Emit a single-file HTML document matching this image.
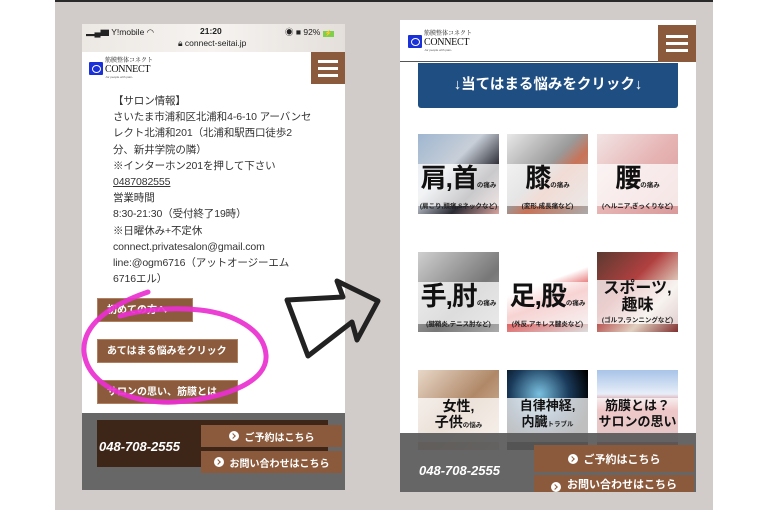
<!DOCTYPE html>
<html><head><meta charset="utf-8">
<style>
*{margin:0;padding:0;box-sizing:border-box}
body{width:770px;height:510px;background:#fff;position:relative;overflow:hidden;font-family:"Liberation Sans","Noto Sans CJK JP",sans-serif}
.abs{position:absolute}
.panel{left:55px;top:0;width:658px;height:510px;background:#d1ccc9;border-top:2px solid #2a2a2a}
.logo{display:flex;align-items:center}
.logo .sq{width:14px;height:13px;background:#1a30d8;border-radius:1px;position:relative}
.logo .sq:after{content:"";position:absolute;left:3px;top:3px;width:7px;height:6px;border:1.5px solid #fff;border-radius:50%}
.logo .t1{font-size:6px;color:#222;line-height:7px;font-family:"Liberation Serif","Noto Serif CJK SC",serif}
.logo .t2{font-size:10px;color:#111;line-height:10px;font-family:"Liberation Serif",serif;letter-spacing:-.3px}
.logo .t3{font-size:3px;color:#555;line-height:4px}
.ham{background:#8b5a3c}
.ham i{position:absolute;left:22%;width:56%;height:3px;background:#fff}
.info{left:113px;top:93px;font-size:10.5px;line-height:16.2px;color:#333;width:205px;letter-spacing:-.1px}
.bbtn{background:#8c5b3d;color:#fff;font-size:10px;font-weight:bold;line-height:23px;padding-left:9px;border:1px solid #b08060}
.rbtn{background:#8b5a3c;color:#fff;font-size:10px;font-weight:bold;display:flex;align-items:center;justify-content:center;gap:6px}
.rbtn b{width:10px;height:10px;background:#fff;border-radius:50%;display:inline-block;position:relative}
.rbtn b:after{content:"";position:absolute;left:2px;top:3px;width:3px;height:3px;border-right:1.5px solid #8b5a3c;border-top:1.5px solid #8b5a3c;transform:rotate(45deg)}
.tile{width:81px;height:80px;overflow:hidden}
.band{position:absolute;left:0;width:100%;background:rgba(255,255,255,.75);text-align:center;color:#111}
.big{font-size:26px;font-weight:bold;line-height:28px;letter-spacing:-1px}
.small{font-size:6.5px;color:#222;font-weight:bold;letter-spacing:0}
</style></head><body>
<div class="abs panel"></div>

<!-- LEFT PHONE -->
<div class="abs" style="left:82px;top:24px;width:263px;height:28px;background:linear-gradient(90deg,#ece8e4,#f6f3f0 50%,#e4dfdb)"></div>
<div class="abs" style="left:86px;top:26px;font-size:8.5px;color:#222">▂▄▆ Y!mobile ◠</div>
<div class="abs" style="left:200px;top:26px;font-size:8.5px;font-weight:bold;color:#222">21:20</div>
<div class="abs" style="left:285px;top:26px;font-size:8.5px;color:#222">◉ ■ 92% <span style="background:#7ed04b;font-size:6px;padding:0 2px">⚡</span></div>
<div class="abs" style="left:178px;top:38px;font-size:8.5px;color:#222">🔒︎ connect-seitai.jp</div>
<div class="abs" style="left:82px;top:52px;width:263px;height:361px;background:#fff"></div>
<div class="abs logo" style="left:89px;top:58px"><div class="sq"></div><div style="margin-left:2px"><div class="t1">筋膜整体コネクト</div><div class="t2">CONNECT</div><div class="t3">-for people with pain-</div></div></div>
<div class="abs ham" style="left:311px;top:52px;width:34px;height:32px"><i style="top:8px"></i><i style="top:15px"></i><i style="top:22px"></i></div>
<div class="abs info">【サロン情報】<br>さいたま市浦和区北浦和4-6-10 アーバンセ<br>レクト北浦和201（北浦和駅西口徒歩2<br>分、新井学院の隣）<br>※インターホン201を押して下さい<br><u>0487082555</u><br>営業時間<br>8:30-21:30（受付終了19時）<br>※日曜休み+不定休<br>connect.privatesalon@gmail.com<br>line:@ogm6716（アットオージーエム<br>6716エル）</div>
<div class="abs bbtn" style="left:97px;top:298px;width:96px;height:24px">初めての方へ</div>
<div class="abs bbtn" style="left:97px;top:339px;width:141px;height:24px">あてはまる悩みをクリック</div>
<div class="abs bbtn" style="left:97px;top:380px;width:141px;height:24px">サロンの思い、筋膜とは</div>
<div class="abs" style="left:82px;top:413px;width:263px;height:77px;background:#676767"></div>
<div class="abs" style="left:97px;top:420px;width:231px;height:47px;background:#3d2618"></div>
<div class="abs" style="left:99px;top:439px;font-size:13px;font-style:italic;color:#fff;font-weight:bold">048-708-2555</div>
<div class="abs rbtn" style="left:201px;top:425px;width:141px;height:22px"><b></b>ご予約はこちら</div>
<div class="abs rbtn" style="left:201px;top:451px;width:141px;height:22px"><b></b>お問い合わせはこちら</div>

<svg class="abs" style="left:0;top:0" width="770" height="510">
<path d="M148 292 C110 305,82 325,84 352 C88 390,140 404,175 402 C230 398,268 380,266 355 C264 330,235 314,200 310 C170 307,140 310,120 316" fill="none" stroke="#ea2fd0" stroke-width="5" stroke-linecap="round" opacity=".92"/>
<polygon points="287,300 343,297 337,281 378,301 357,340 352,322 308,356" fill="none" stroke="#222" stroke-width="5" stroke-linejoin="round"/>
</svg>

<!-- RIGHT PHONE -->
<div class="abs" style="left:400px;top:20px;width:296px;height:472px;background:#fff"></div>
<div class="abs" style="left:400px;top:61px;width:296px;height:1px;background:#555"></div>
<div class="abs logo" style="left:408px;top:31px"><div class="sq"></div><div style="margin-left:2px"><div class="t1">筋膜整体コネクト</div><div class="t2">CONNECT</div><div class="t3">-for people with pain-</div></div></div>
<div class="abs ham" style="left:658px;top:25px;width:38px;height:37px"><i style="top:10px"></i><i style="top:17px"></i><i style="top:24px"></i></div>
<div class="abs" style="left:418px;top:63px;width:260px;height:45px;background:#1f4e83;border-radius:0 0 3px 3px;color:#fff;font-size:14.5px;font-weight:bold;text-align:center;line-height:45px">↓当てはまる悩みをクリック↓</div>

<div class="abs tile" style="left:418px;top:134px;background:linear-gradient(135deg,#9fb6d0,#c8cfd8 40%,#2a2a33 70%,#d9a6a0)"><div class="band" style="top:30px;height:42px"><div class="big">肩,首<span class="small">の痛み</span></div><div class="small">(肩こり,頭痛,Sネックなど)</div></div></div>
<div class="abs tile" style="left:507px;top:134px;background:linear-gradient(135deg,#e8e8e8,#9a9a9a 45%,#c87358 60%,#aaa)"><div class="band" style="top:30px;height:42px"><div class="big">膝<span class="small">の痛み</span></div><div class="small">(変形,成長痛など)</div></div></div>
<div class="abs tile" style="left:597px;top:134px;background:linear-gradient(135deg,#f2e4e4,#e6b3b3 50%,#d99a9a)"><div class="band" style="top:30px;height:42px"><div class="big">腰<span class="small">の痛み</span></div><div class="small">(ヘルニア,ぎっくりなど)</div></div></div>

<div class="abs tile" style="left:418px;top:252px;background:linear-gradient(135deg,#cfcfcf,#777 60%,#aaa)"><div class="band" style="top:30px;height:42px"><div class="big">手,肘<span class="small">の痛み</span></div><div class="small">(腱鞘炎,テニス肘など)</div></div></div>
<div class="abs tile" style="left:507px;top:252px;background:linear-gradient(160deg,#fff 40%,#e05050 60%,#ddd)"><div class="band" style="top:30px;height:42px"><div class="big">足,股<span class="small">の痛み</span></div><div class="small">(外反,アキレス腱炎など)</div></div></div>
<div class="abs tile" style="left:597px;top:252px;background:linear-gradient(135deg,#5a3a30,#b04040 40%,#e0d0c0 70%,#803030)"><div class="band" style="top:28px;height:44px"><div style="font-size:16px;font-weight:bold;line-height:17px">スポーツ,<br>趣味</div><div class="small">(ゴルフ,ランニングなど)</div></div></div>

<div class="abs tile" style="left:418px;top:370px;background:linear-gradient(135deg,#e8d8c8,#b08868 50%,#e0c8b0)"><div class="band" style="top:28px;height:44px"><div style="font-size:14px;font-weight:bold;line-height:16px">女性,<br>子供<span class="small">の悩み</span></div></div></div>
<div class="abs tile" style="left:507px;top:370px;background:radial-gradient(circle at 40% 30%,#7ac0e0,#1a3a5a 40%,#000 70%)"><div class="band" style="top:28px;height:44px"><div style="font-size:13px;font-weight:bold;line-height:16px">自律神経,<br>内臓<span class="small">トラブル</span></div></div></div>
<div class="abs tile" style="left:597px;top:370px;background:linear-gradient(180deg,#a8c4e8,#e8eef8 30%,#c02828 50%,#801818)"><div class="band" style="top:28px;height:44px"><div style="font-size:13px;font-weight:bold;line-height:16px">筋膜とは？<br>サロンの思い</div></div></div>

<div class="abs" style="left:400px;top:433px;width:296px;height:59px;background:rgba(90,90,90,.93)"></div>
<div class="abs" style="left:419px;top:463px;font-size:13px;font-style:italic;color:#fff;font-weight:bold">048-708-2555</div>
<div class="abs rbtn" style="left:534px;top:445px;width:160px;height:27px;font-size:11px"><b></b>ご予約はこちら</div>
<div class="abs rbtn" style="left:534px;top:475px;width:160px;height:17px;font-size:11px;align-items:flex-end;overflow:hidden"><b></b>お問い合わせはこちら</div>
</body></html>
